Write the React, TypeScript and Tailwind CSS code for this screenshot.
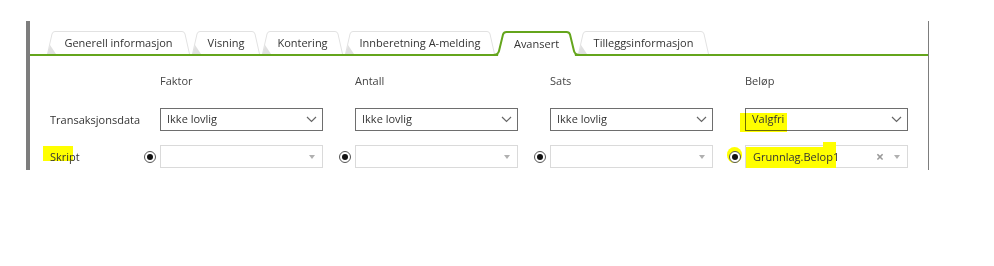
import React from 'react'

const tabs = [
  { label: 'Generell informasjon', w: 143 },
  { label: 'Visning', w: 68 },
  { label: 'Kontering', w: 81 },
  { label: 'Innberetning A-melding', w: 150 },
  { label: 'Avansert', w: 79, active: true },
  { label: 'Tilleggsinformasjon', w: 131 },
]

function Tab({ label, w, active }: { label: string; w: number; active?: boolean }) {
  if (active) {
    const h = 25
    return (
      <div className="relative z-10 -mb-[2px] flex h-[25px] shrink-0 items-center justify-center pt-[1px]" style={{ width: w }}>
        <svg className="absolute left-0 top-0 overflow-visible" width={w} height={h}>
          <path d={`M1,25 L2,20 L6,3 L${w - 6},3 L${w - 2},20 L${w - 1},25 Z`} fill="#fff" />
          <path
            d={`M-4,24 Q1,24 2,20 L6,3.5 Q6.8,1 9.5,1 L${w - 9.5},1 Q${w - 6.8},1 ${w - 6},3.5 L${w - 2},20 Q${w - 1},24 ${w + 4},24`}
            fill="none"
            stroke="#64a51c"
            strokeWidth={2}
          />
        </svg>
        <span className="relative text-[11px] text-[#333]">{label}</span>
      </div>
    )
  }
  const h = 23
  return (
    <div className="relative flex h-[23px] shrink-0 items-center justify-center pt-[2px]" style={{ width: w }}>
      <svg className="absolute left-0 top-0" width={w} height={h}>
        <path
          d={`M0.5,${h} L5,3 Q5.6,0.5 8,0.5 L${w - 8},0.5 Q${w - 5.6},0.5 ${w - 5},3 L${w - 0.5},${h}`}
          fill="#fff"
          stroke="#e2e2e2"
          strokeWidth={1}
        />
        <path d={`M0.5,${h} L3,${h - 9} L9,${h} Z`} fill="#e0e0e0" />
      </svg>
      <span className="relative text-[11px] text-[#333]">{label}</span>
    </div>
  )
}

function Chevron() {
  return (
    <svg width="11" height="7" viewBox="0 0 11 7" className="shrink-0">
      <polyline points="1,1 5.5,5.5 10,1" fill="none" stroke="#666" strokeWidth="1.2" />
    </svg>
  )
}

function Caret() {
  return (
    <svg width="6" height="4" viewBox="0 0 6 4" className="shrink-0">
      <polygon points="0,0 6,0 3,4" fill="#b0b0b0" />
    </svg>
  )
}

function Radio({ marked }: { marked?: boolean }) {
  return (
    <div className="relative flex h-[23px] w-[16px] shrink-0 items-center">
      {marked && <div className="absolute left-[-2px] top-[2px] h-[16px] w-[15px] rounded-full bg-[#ffff00]" />}
      <div className="relative flex h-[12px] w-[12px] items-center justify-center rounded-full border border-[#555] bg-white">
        <div className="h-[6px] w-[6px] rounded-full bg-[#111]" />
      </div>
    </div>
  )
}

function Select({ value, highlight }: { value: string; highlight?: boolean }) {
  return (
    <div className="relative flex h-[23px] w-[163px] items-center justify-between border border-[#6e6e6e] bg-white pl-[6px] pr-[5px]">
      {highlight && <div className="absolute left-[-6px] top-[4px] h-[19px] w-[47px] bg-[#ffff00] mix-blend-multiply" />}
      <span className="relative text-[11px] text-[#333]">{value}</span>
      <Chevron />
    </div>
  )
}

function Combo({ value }: { value?: string }) {
  return (
    <div className="relative flex h-[23px] w-[163px] items-center justify-between border border-[#dadada] bg-white pl-[7px] pr-[7px]">
      {value && (
        <>
          <div className="absolute left-0 top-[1px] h-[21px] w-[90px] bg-[#ffff00]" />
          <div className="absolute left-[77px] top-[-4px] h-[6px] w-[13px] bg-[#ffff00]" />
        </>
      )}
      <span className="relative pt-[2px] text-[11px] text-[#333]">{value}</span>
      <div className="relative flex items-center gap-[10px]">
        {value && <span className="text-[14px] font-bold leading-none text-[#999]">×</span>}
        <Caret />
      </div>
    </div>
  )
}

export default function App() {
  return (
    <div className="h-[266px] w-[994px] bg-white pt-[21px] font-['Open_Sans',sans-serif] text-[#333]">
      <div className="ml-[26px] h-[149px] w-[903px] border-l-4 border-r border-l-[#7d7d7d] border-r-[#7d7d7d]">
        {/* faner */}
        <div className="flex h-[35px] items-end gap-[2px] border-b-2 border-[#64a51c] pl-[17px]">
          {tabs.map((t) => (
            <Tab key={t.label} label={t.label} w={t.w} active={t.active} />
          ))}
        </div>

        {/* skjema */}
        <div className="pt-[14px]">
          <div className="flex h-[22px] items-center pl-[114px] text-[11px] text-[#444]">
            {['Faktor', 'Antall', 'Sats', 'Beløp'].map((c) => (
              <div key={c} className="w-[195px] pl-[16px]">
                {c}
              </div>
            ))}
          </div>

          <div className="mt-[16px] flex items-center">
            <div className="w-[114px] pl-[20px] pt-[2px] text-[11px] text-[#333]">Transaksjonsdata</div>
            {['Ikke lovlig', 'Ikke lovlig', 'Ikke lovlig', 'Valgfri'].map((v, i) => (
              <div key={i} className="w-[195px] pl-[16px]">
                <Select value={v} highlight={i === 3} />
              </div>
            ))}
          </div>

          <div className="mt-[14px] flex items-center">
            <div className="w-[114px] pl-[20px] pt-[2px] text-[11px] text-[#333]">
              <span className="relative">
                <span className="absolute left-[-7px] top-[-3px] h-[15px] w-[30px] bg-[#ffff00]" />
                <span className="relative">Skript</span>
              </span>
            </div>
            {[0, 1, 2, 3].map((i) => (
              <div key={i} className="flex w-[195px] items-center">
                <Radio marked={i === 3} />
                <Combo value={i === 3 ? 'Grunnlag.Belop1' : undefined} />
              </div>
            ))}
          </div>
        </div>
      </div>
    </div>
  )
}
